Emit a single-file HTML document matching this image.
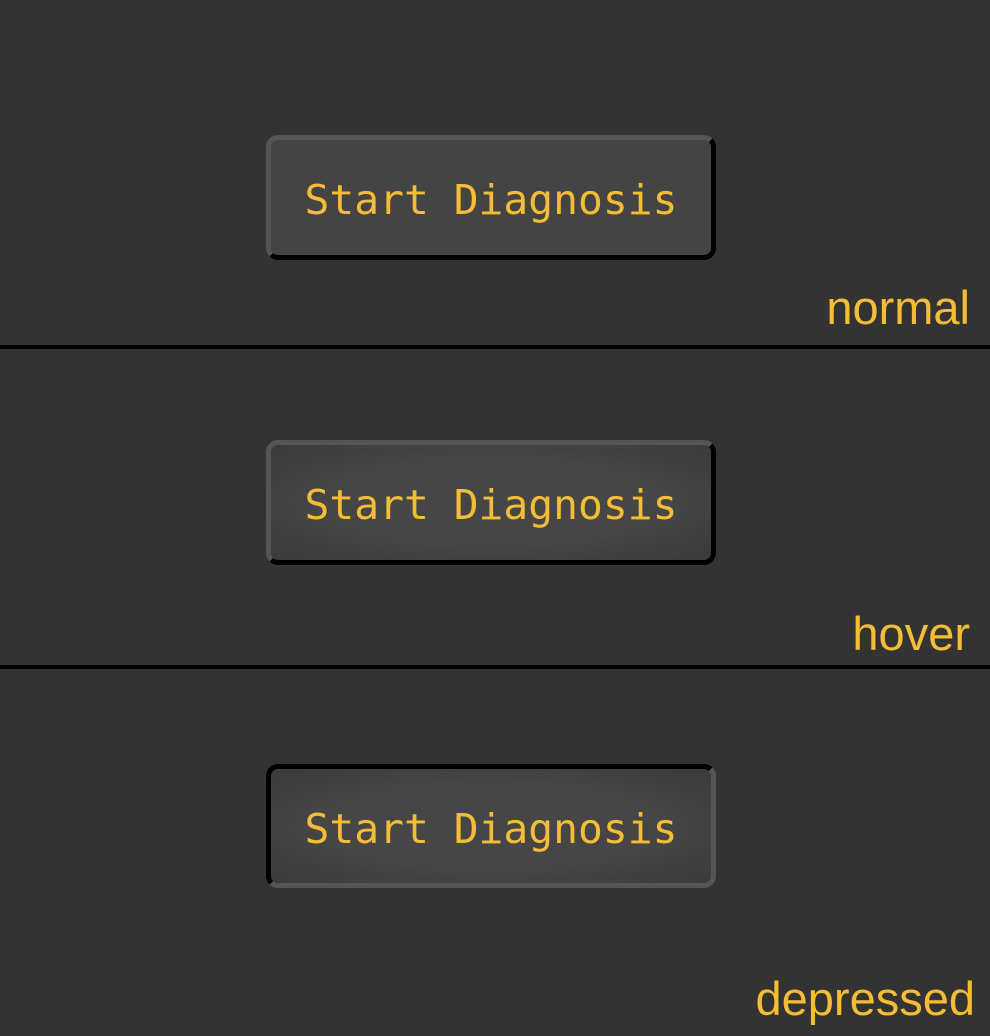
<!DOCTYPE html>
<html><head><style>
html,body{margin:0;padding:0;background:#333;width:990px;height:1036px;overflow:hidden;position:relative;font-family:"Liberation Sans",sans-serif}
.line{position:absolute;left:0;width:990px;height:4px;background:#000}
.btn{position:absolute;left:266px;width:440px;height:115px;border:5px solid;border-radius:12px;background:#444;color:#f5bd35;font-family:"DejaVu Sans Mono",monospace;font-size:41.3px;line-height:121px;text-align:center;box-sizing:content-box;white-space:pre}
.n{border-color:#555 #000 #000 #555}
.h{border-color:#555 #000 #000 #555;background:radial-gradient(ellipse at center,#464646 55%,#3a3a3a 100%)}
.d{border-color:#000 #555 #555 #000;background:radial-gradient(ellipse at center,#464646 55%,#3a3a3a 100%)}
.lab{position:absolute;color:#f5bd35;font-size:47px;line-height:1;text-align:right}
</style></head><body>
<div class="btn n" style="top:135px">Start Diagnosis</div>
<div class="lab" style="right:20px;top:284px">normal</div>
<div class="line" style="top:345px"></div>
<div class="btn h" style="top:440px">Start Diagnosis</div>
<div class="lab" style="right:20px;top:610px">hover</div>
<div class="line" style="top:665px"></div>
<div class="btn d" style="top:764px;height:114px">Start Diagnosis</div>
<div class="lab" style="right:15px;top:975px">depressed</div>
</body></html>
